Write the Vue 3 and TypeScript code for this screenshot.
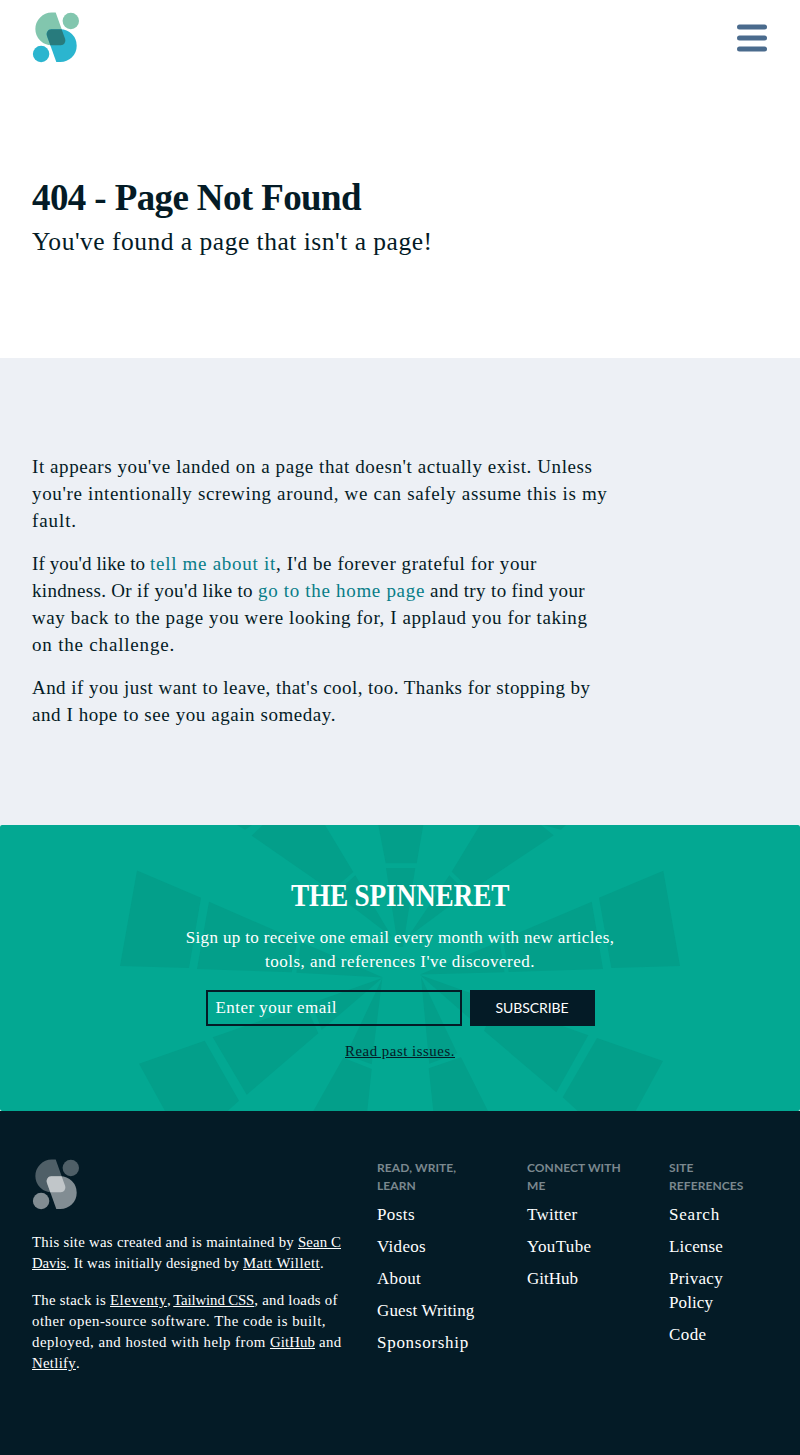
<script setup lang="ts">
import type { Directive } from 'vue'

interface Run {
  text: string
  width: number
  link?: boolean
}
type Line = Run[]

interface LinkColumn {
  heading: string[]
  items: Line[][]
  key: string
}

// Tracks a run of text so that it takes up exactly the given measure.
const vFit: Directive<HTMLElement, number> = {
  mounted(el, binding) {
    const natural = el.getBoundingClientRect().width
    const count = (el.textContent ?? '').length
    if (count > 0) el.style.letterSpacing = `${(binding.value - natural) / count}px`
  },
}

const body: Line[][] = [
  [
    [{ text: "It appears you've landed on a page that doesn't actually exist. Unless", width: 560.5 }],
    [{ text: "you're intentionally screwing around, we can safely assume this is my", width: 575.5 }],
    [{ text: 'fault.', width: 45 }],
  ],
  [
    [
      { text: "If you'd like to ", width: 118 },
      { text: 'tell me about it', width: 126, link: true },
      { text: ", I'd be forever grateful for your", width: 261 },
    ],
    [
      { text: "kindness. Or if you'd like to ", width: 226 },
      { text: 'go to the home page', width: 167, link: true },
      { text: ' and try to find your', width: 160 },
    ],
    [{ text: 'way back to the page you were looking for, I applaud you for taking', width: 555.5 }],
    [{ text: 'on the challenge.', width: 143 }],
  ],
  [
    [{ text: "And if you just want to leave, that's cool, too. Thanks for stopping by", width: 558.5 }],
    [{ text: 'and I hope to see you again someday.', width: 304 }],
  ],
]

const about: Line[][] = [
  [
    [
      { text: 'This site was created and is maintained by ', width: 266 },
      { text: 'Sean C', width: 43, link: true },
    ],
    [
      { text: 'Davis', width: 34, link: true },
      { text: '. It was initially designed by ', width: 177 },
      { text: 'Matt Willett', width: 77, link: true },
      { text: '.', width: 4 },
    ],
  ],
  [
    [
      { text: 'The stack is ', width: 78 },
      { text: 'Eleventy', width: 56, link: true },
      { text: ', ', width: 6 },
      { text: 'Tailwind CSS', width: 81, link: true },
      { text: ', and loads of', width: 83.5 },
    ],
    [{ text: 'other open-source software. The code is built,', width: 294 }],
    [
      { text: 'deployed, and hosted with help from ', width: 238 },
      { text: 'GitHub', width: 45, link: true },
      { text: ' and', width: 26.5 },
    ],
    [
      { text: 'Netlify', width: 43, link: true },
      { text: '.', width: 4 },
    ],
  ],
]

const columns: LinkColumn[] = [
  {
    key: 'site',
    heading: ['READ, WRITE,', 'LEARN'],
    items: [
      [[{ text: 'Posts', width: 38 }]],
      [[{ text: 'Videos', width: 49 }]],
      [[{ text: 'About', width: 44 }]],
      [[{ text: 'Guest Writing', width: 97.5 }]],
      [[{ text: 'Sponsorship', width: 92 }]],
    ],
  },
  {
    key: 'social',
    heading: ['CONNECT WITH', 'ME'],
    items: [
      [[{ text: 'Twitter', width: 50.5 }]],
      [[{ text: 'YouTube', width: 64.5 }]],
      [[{ text: 'GitHub', width: 51 }]],
    ],
  },
  {
    key: 'refs',
    heading: ['SITE', 'REFERENCES'],
    items: [
      [[{ text: 'Search', width: 51 }]],
      [[{ text: 'License', width: 54 }]],
      [[{ text: 'Privacy', width: 54 }], [{ text: 'Policy', width: 44 }]],
      [[{ text: 'Code', width: 37.5 }]],
    ],
  },
]

// Segments of the web drawn behind the newsletter form.
const web: string[] = [
  '137,45.5 201,72.7 189,143 120,141',
  '209,76.7 297.3,115.2 291.7,147.3 197,144',
  '301,117 383,152.5 296.3,147.7',
  '663.3,45.7 599,72.7 611.3,143 680,141',
  '591.7,76.7 503,114.5 508.7,147 603,144',
  '499.5,116.5 420,149.5 504.5,147.3',
  '378.3,0 423.3,0 416.7,38.3 385.7,38.3',
  '386,43 415.3,43 403,122 398,122',
  '251.7,10.7 262.7,0 325,0 353.3,47 331.5,66',
  '355.3,50.3 392,112 335,68.5',
  '553.7,10.3 541,0 480,0 451.7,46.7 471,65.5',
  '449.3,50.3 408,112 467,68',
  '237,0 252,0 245,4.7',
  '566,0 543,0 561,4.7',
  '212.7,212.3 246.7,269.7 318.3,208.3 305.7,180',
  '311.7,178 321.7,205 382.3,153',
  '139,238.7 204.7,215.7 239,275.7 227.7,286 165,286',
  '382.3,153.3 371.7,239.3 346,230',
  '371.7,244 343.3,232.7 313.3,286 367.3,286',
  '421,152 429.3,238.7 457.3,228.3',
  '428.7,243.3 461,232.3 488,286 433.3,286',
  '588.3,210.3 556.3,267.3 484,205.7 496.7,177.5',
  '490,175 478.3,201 420,150',
  '597,213 663,236 635.7,286 577.7,286 562.7,272.3',
]
</script>

<template>
  <div class="page">
    <header class="header">
      <svg class="logo" width="48" height="52" viewBox="32 12 48 52">
        <path class="logo-top" d="M55.7 12.6 L65 38.6 C66.2 42 64 45.3 60.8 45.3 H51.7 A16.35 16.35 0 0 1 51.7 12.6Z" />
        <circle class="logo-top" cx="70.8" cy="21" r="8.2" />
        <path class="logo-bottom" d="M56.3 62.1 L47 36.1 C45.8 32.7 48 29.3 51.2 29.3 H60.3 A16.4 16.4 0 0 1 60.3 62.1Z" />
        <circle class="logo-bottom" cx="41.1" cy="54" r="8.2" />
        <path class="logo-mid" d="M51.2 29.3 H61.6 L65 38.6 C66.2 42 64 45.3 60.8 45.3 H50.3 L47 36.1 C45.8 32.7 48 29.3 51.2 29.3Z" />
      </svg>
      <button class="menu" aria-label="Menu">
        <svg width="30" height="28" viewBox="0 0 30 28">
          <rect x="0" y="0.5" width="30" height="5" rx="2.5" />
          <rect x="0" y="11.5" width="30" height="5" rx="2.5" />
          <rect x="0" y="22.5" width="30" height="5" rx="2.5" />
        </svg>
      </button>
    </header>

    <section class="hero">
      <h1 class="title"><span v-fit="329">404 - Page Not Found</span></h1>
      <p class="subtitle"><span v-fit="400.5">You've found a page that isn't a page!</span></p>
    </section>

    <main class="content">
      <p v-for="(para, p) in body" :key="p" class="para">
        <span v-for="(line, l) in para" :key="l" class="line"
          ><span v-for="(run, r) in line" :key="r" v-fit="run.width" :class="{ accent: run.link }">{{ run.text }}</span></span
        >
      </p>
    </main>

    <section class="newsletter">
      <svg class="web" width="800" height="286" viewBox="0 0 800 286">
        <polygon v-for="points in web" :key="points" :points="points" />
      </svg>
      <div class="signup">
        <h2 class="news-title"><span v-fit="218" class="condensed">THE SPINNERET</span></h2>
        <p class="news-text">
          <span class="line"><span v-fit="428.5">Sign up to receive one email every month with new articles,</span></span>
          <span class="line"><span v-fit="270">tools, and references I've discovered.</span></span>
        </p>
        <div class="form">
          <div class="field"><span v-fit="121.5">Enter your email</span></div>
          <button class="subscribe"><span v-fit="73">SUBSCRIBE</span></button>
        </div>
        <p class="past"><span v-fit="110">Read past issues.</span></p>
      </div>
    </section>

    <footer class="footer">
      <div class="about">
        <svg class="logo" width="48" height="52" viewBox="32 12 48 52">
          <path class="mono-top" d="M55.7 12.6 L65 38.6 C66.2 42 64 45.3 60.8 45.3 H51.7 A16.35 16.35 0 0 1 51.7 12.6Z" />
          <circle class="mono-top" cx="70.8" cy="21" r="8.2" />
          <path class="mono-bottom" d="M56.3 62.1 L47 36.1 C45.8 32.7 48 29.3 51.2 29.3 H60.3 A16.4 16.4 0 0 1 60.3 62.1Z" />
          <circle class="mono-bottom" cx="41.1" cy="54" r="8.2" />
          <path class="mono-mid" d="M51.2 29.3 H61.6 L65 38.6 C66.2 42 64 45.3 60.8 45.3 H50.3 L47 36.1 C45.8 32.7 48 29.3 51.2 29.3Z" />
        </svg>
        <p v-for="(para, p) in about" :key="p" class="about-para">
          <span v-for="(line, l) in para" :key="l" class="line"
            ><span v-for="(run, r) in line" :key="r" v-fit="run.width" :class="{ under: run.link }">{{ run.text }}</span></span
          >
        </p>
      </div>
      <nav v-for="col in columns" :key="col.key" class="column" :class="col.key">
        <h3 class="heading">
          <span v-for="h in col.heading" :key="h" class="line">{{ h }}</span>
        </h3>
        <ul class="links">
          <li v-for="(item, i) in col.items" :key="i">
            <span v-for="(line, l) in item" :key="l" class="line"
              ><span v-for="(run, r) in line" :key="r" v-fit="run.width">{{ run.text }}</span></span
            >
          </li>
        </ul>
      </nav>
    </footer>
  </div>
</template>

<style>
body {
  margin: 0;
  background: #ffffff;
}
</style>

<style scoped>
.page {
  width: 800px;
  font-family: 'Liberation Serif', serif;
  color: #041b26;
}
h1, h2, h3, p, ul {
  margin: 0;
  padding: 0;
}
.line {
  display: block;
  white-space: pre;
}
.header {
  box-sizing: border-box;
  height: 76px;
  padding: 12px 33px 12px 32px;
  display: flex;
  align-items: center;
  justify-content: space-between;
}
.logo {
  display: block;
}
.logo-top { fill: #82c6ae; }
.logo-bottom { fill: #2bb5cf; }
.logo-mid { fill: #287b7d; }
.menu {
  padding: 0;
  border: 0;
  background: none;
  fill: #4a6b8d;
}
.menu svg {
  display: block;
}
.hero {
  box-sizing: border-box;
  height: 282px;
  padding: 99px 32px 0;
}
.title {
  font-size: 37px;
  line-height: 45px;
  font-weight: 700;
  white-space: nowrap;
}
.subtitle {
  margin-top: 4px;
  font-size: 25.5px;
  line-height: 36px;
  white-space: nowrap;
}
.content {
  box-sizing: border-box;
  height: 467px;
  padding: 95px 32px 0;
  background: #edf0f5;
  display: flex;
  flex-direction: column;
  gap: 16px;
}
.para {
  font-size: 19px;
  line-height: 27px;
}
.accent {
  color: #087d88;
}
.newsletter {
  display: grid;
  height: 286px;
  border-radius: 2px;
  overflow: hidden;
  background: #03a892;
}
.web,
.signup {
  grid-area: 1 / 1;
}
.web {
  fill: #039f8a;
}
.signup {
  z-index: 1;
  padding-top: 48px;
  text-align: center;
  color: #ffffff;
}
.news-title {
  font-size: 31px;
  line-height: 45px;
  font-weight: 700;
}
.condensed {
  display: inline-block;
  white-space: nowrap;
  transform: scaleX(0.88);
}
.news-text {
  margin-top: 8px;
  font-size: 17px;
  line-height: 24px;
}
.form {
  margin-top: 16px;
  display: flex;
  justify-content: center;
  gap: 8px;
}
.field {
  box-sizing: border-box;
  width: 256px;
  height: 36px;
  padding: 0 8px;
  border: 2px solid #041b26;
  font-size: 17px;
  line-height: 31px;
  text-align: left;
}
.subscribe {
  width: 125px;
  height: 36px;
  padding: 0 0 2px;
  border: 0;
  background: #041b26;
  color: #ffffff;
  font-family: Lato, sans-serif;
  font-size: 14px;
}
.past {
  margin-top: 15px;
  font-size: 14.8px;
  line-height: 21px;
  color: #041b26;
  text-decoration: underline;
}
.footer {
  box-sizing: border-box;
  height: 344px;
  padding: 48px 32px 0;
  background: #041b26;
  color: #ffffff;
  display: grid;
  grid-template-columns: 345px 150px 142px 99px;
}
.mono-top { fill: #4f5f67; }
.mono-bottom { fill: #828d93; }
.mono-mid { fill: #c1c6c9; }
.about-para {
  margin-top: 16px;
  font-size: 14.8px;
  line-height: 21px;
}
.logo + .about-para {
  margin-top: 21px;
}
.under {
  text-decoration: underline;
}
.heading {
  font-family: Lato, sans-serif;
  font-size: 12px;
  line-height: 18px;
  font-weight: 700;
  letter-spacing: 0.08px;
  color: #7b888e;
}
.links {
  list-style: none;
  margin-top: 8px;
  display: flex;
  flex-direction: column;
  gap: 8px;
  font-size: 17px;
  line-height: 24px;
}
</style>
